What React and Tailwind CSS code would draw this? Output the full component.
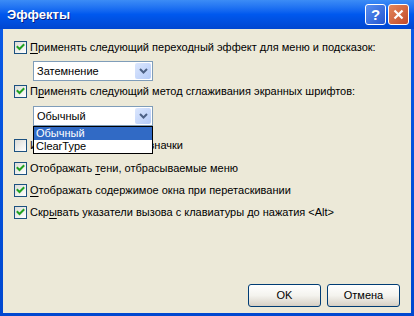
import React from "react";

const font = { fontFamily: '"Liberation Sans", Arial, sans-serif' };

function Check({ checked = true }) {
  return (
    <div className="relative w-[13px] h-[13px] shrink-0 border border-[#1C5180] bg-gradient-to-br from-[#DCDCD7] to-[#FFFFFF]">
      {checked && (
        <svg width="11" height="11" viewBox="0 0 11 11" className="absolute left-0 top-0">
          <path d="M2.5 5 L4.5 7 L8.5 3" fill="none" stroke="#21A121" strokeWidth="2" strokeLinecap="square" />
        </svg>
      )}
    </div>
  );
}

function Row({ children, checked = true }) {
  return (
    <div className="flex items-center h-[13px] gap-[3px]">
      <Check checked={checked} />
      <span className="text-[11px] leading-[13px] text-black whitespace-nowrap">{children}</span>
    </div>
  );
}

function Combo({ value }) {
  return (
    <div className="flex items-center w-[120px] h-[20px] border border-[#7F9DB9] bg-white">
      <span className="flex-1 pl-[3px] text-[11px] leading-[13px] text-black">{value}</span>
      <div className="mr-[1px] w-[16px] h-[16px] rounded-[2px] bg-gradient-to-br from-[#DCE7FD] to-[#B5CBF8] flex items-center justify-center">
        <svg width="9" height="6" viewBox="0 0 9 6">
          <path d="M1 1 L4.5 4.5 L8 1" fill="none" stroke="#4D6185" strokeWidth="2" />
        </svg>
      </div>
    </div>
  );
}

function U({ children }) {
  return <span className="underline underline-offset-[2px]">{children}</span>;
}

function XPButton({ children }) {
  return (
    <button className="w-[73px] h-[23px] rounded-[3px] border border-[#003C74] bg-gradient-to-b from-[#FFFFFF] via-[#F4F3EE] to-[#D6D0C5] text-[11px] text-black shadow-[inset_0_-1px_0_#D6D0C5]">
      {children}
    </button>
  );
}

export default function App() {
  return (
    <div style={font} className="w-[414px] h-[316px] flex flex-col bg-gradient-to-b from-[#0A5BE8] to-[#0048D0] overflow-hidden">
      {/* title bar */}
      <div className="h-[29px] shrink-0 flex items-center pl-[7px] pr-[5px] bg-gradient-to-b from-[#3C8CF6] via-[#0058EE] to-[#0046D0]">
        <span className="flex-1 text-white font-bold text-[13px] [text-shadow:1px_1px_0_#0A1E80]">Эффекты</span>
        <div className="flex gap-[2px]">
          <div className="w-[21px] h-[21px] rounded-[3px] border border-white bg-gradient-to-br from-[#5A8FF0] to-[#2456D0] flex items-center justify-center">
            <span className="text-white font-bold text-[15px] leading-none">?</span>
          </div>
          <div className="w-[21px] h-[21px] rounded-[3px] border border-white bg-gradient-to-br from-[#E4875C] to-[#C1492A] flex items-center justify-center">
            <svg width="11" height="11" viewBox="0 0 11 11">
              <path d="M1.5 1.5 L9.5 9.5 M9.5 1.5 L1.5 9.5" stroke="white" strokeWidth="2.2" />
            </svg>
          </div>
        </div>
      </div>
      {/* body */}
      <div className="flex-1 mx-[3px] mb-[3px] bg-[#ECE9D8] flex flex-col pl-[11px] pt-[12px] pr-[11px] pb-[6px]">
        <Row><U>П</U>рименять следующий переходный эффект для меню и подсказок:</Row>
        <div className="ml-[19px] mt-[7px]"><Combo value="Затемнение" /></div>
        <div className="mt-[4px]"><Row>П<U>р</U>именять следующий метод сглаживания экранных шрифтов:</Row></div>
        <div className="ml-[19px] mt-[8px] relative">
          <Combo value="Обычный" />
          <div className="absolute left-0 top-full w-[120px] border border-black bg-white z-10 flex flex-col">
            <div className="h-[13px] bg-[#316AC5] text-white text-[11px] leading-[13px] pl-[2px]">Обычный</div>
            <div className="h-[13px] text-black text-[11px] leading-[13px] pl-[2px]">ClearType</div>
          </div>
        </div>
        <div className="mt-[13px]"><Row checked={false}>Использовать крупные значки</Row></div>
        <div className="mt-[10px]"><Row>Отображать <U>т</U>ени, отбрасываемые меню</Row></div>
        <div className="mt-[9px]"><Row><U>О</U>тображать содержимое окна при перетаскивании</Row></div>
        <div className="mt-[9px]"><Row>Скр<U>ы</U>вать указатели вызова с клавиатуры до нажатия &lt;Alt&gt;</Row></div>
        <div className="mt-auto flex justify-end gap-[6px]">
          <XPButton>OK</XPButton>
          <XPButton>Отмена</XPButton>
        </div>
      </div>
    </div>
  );
}
